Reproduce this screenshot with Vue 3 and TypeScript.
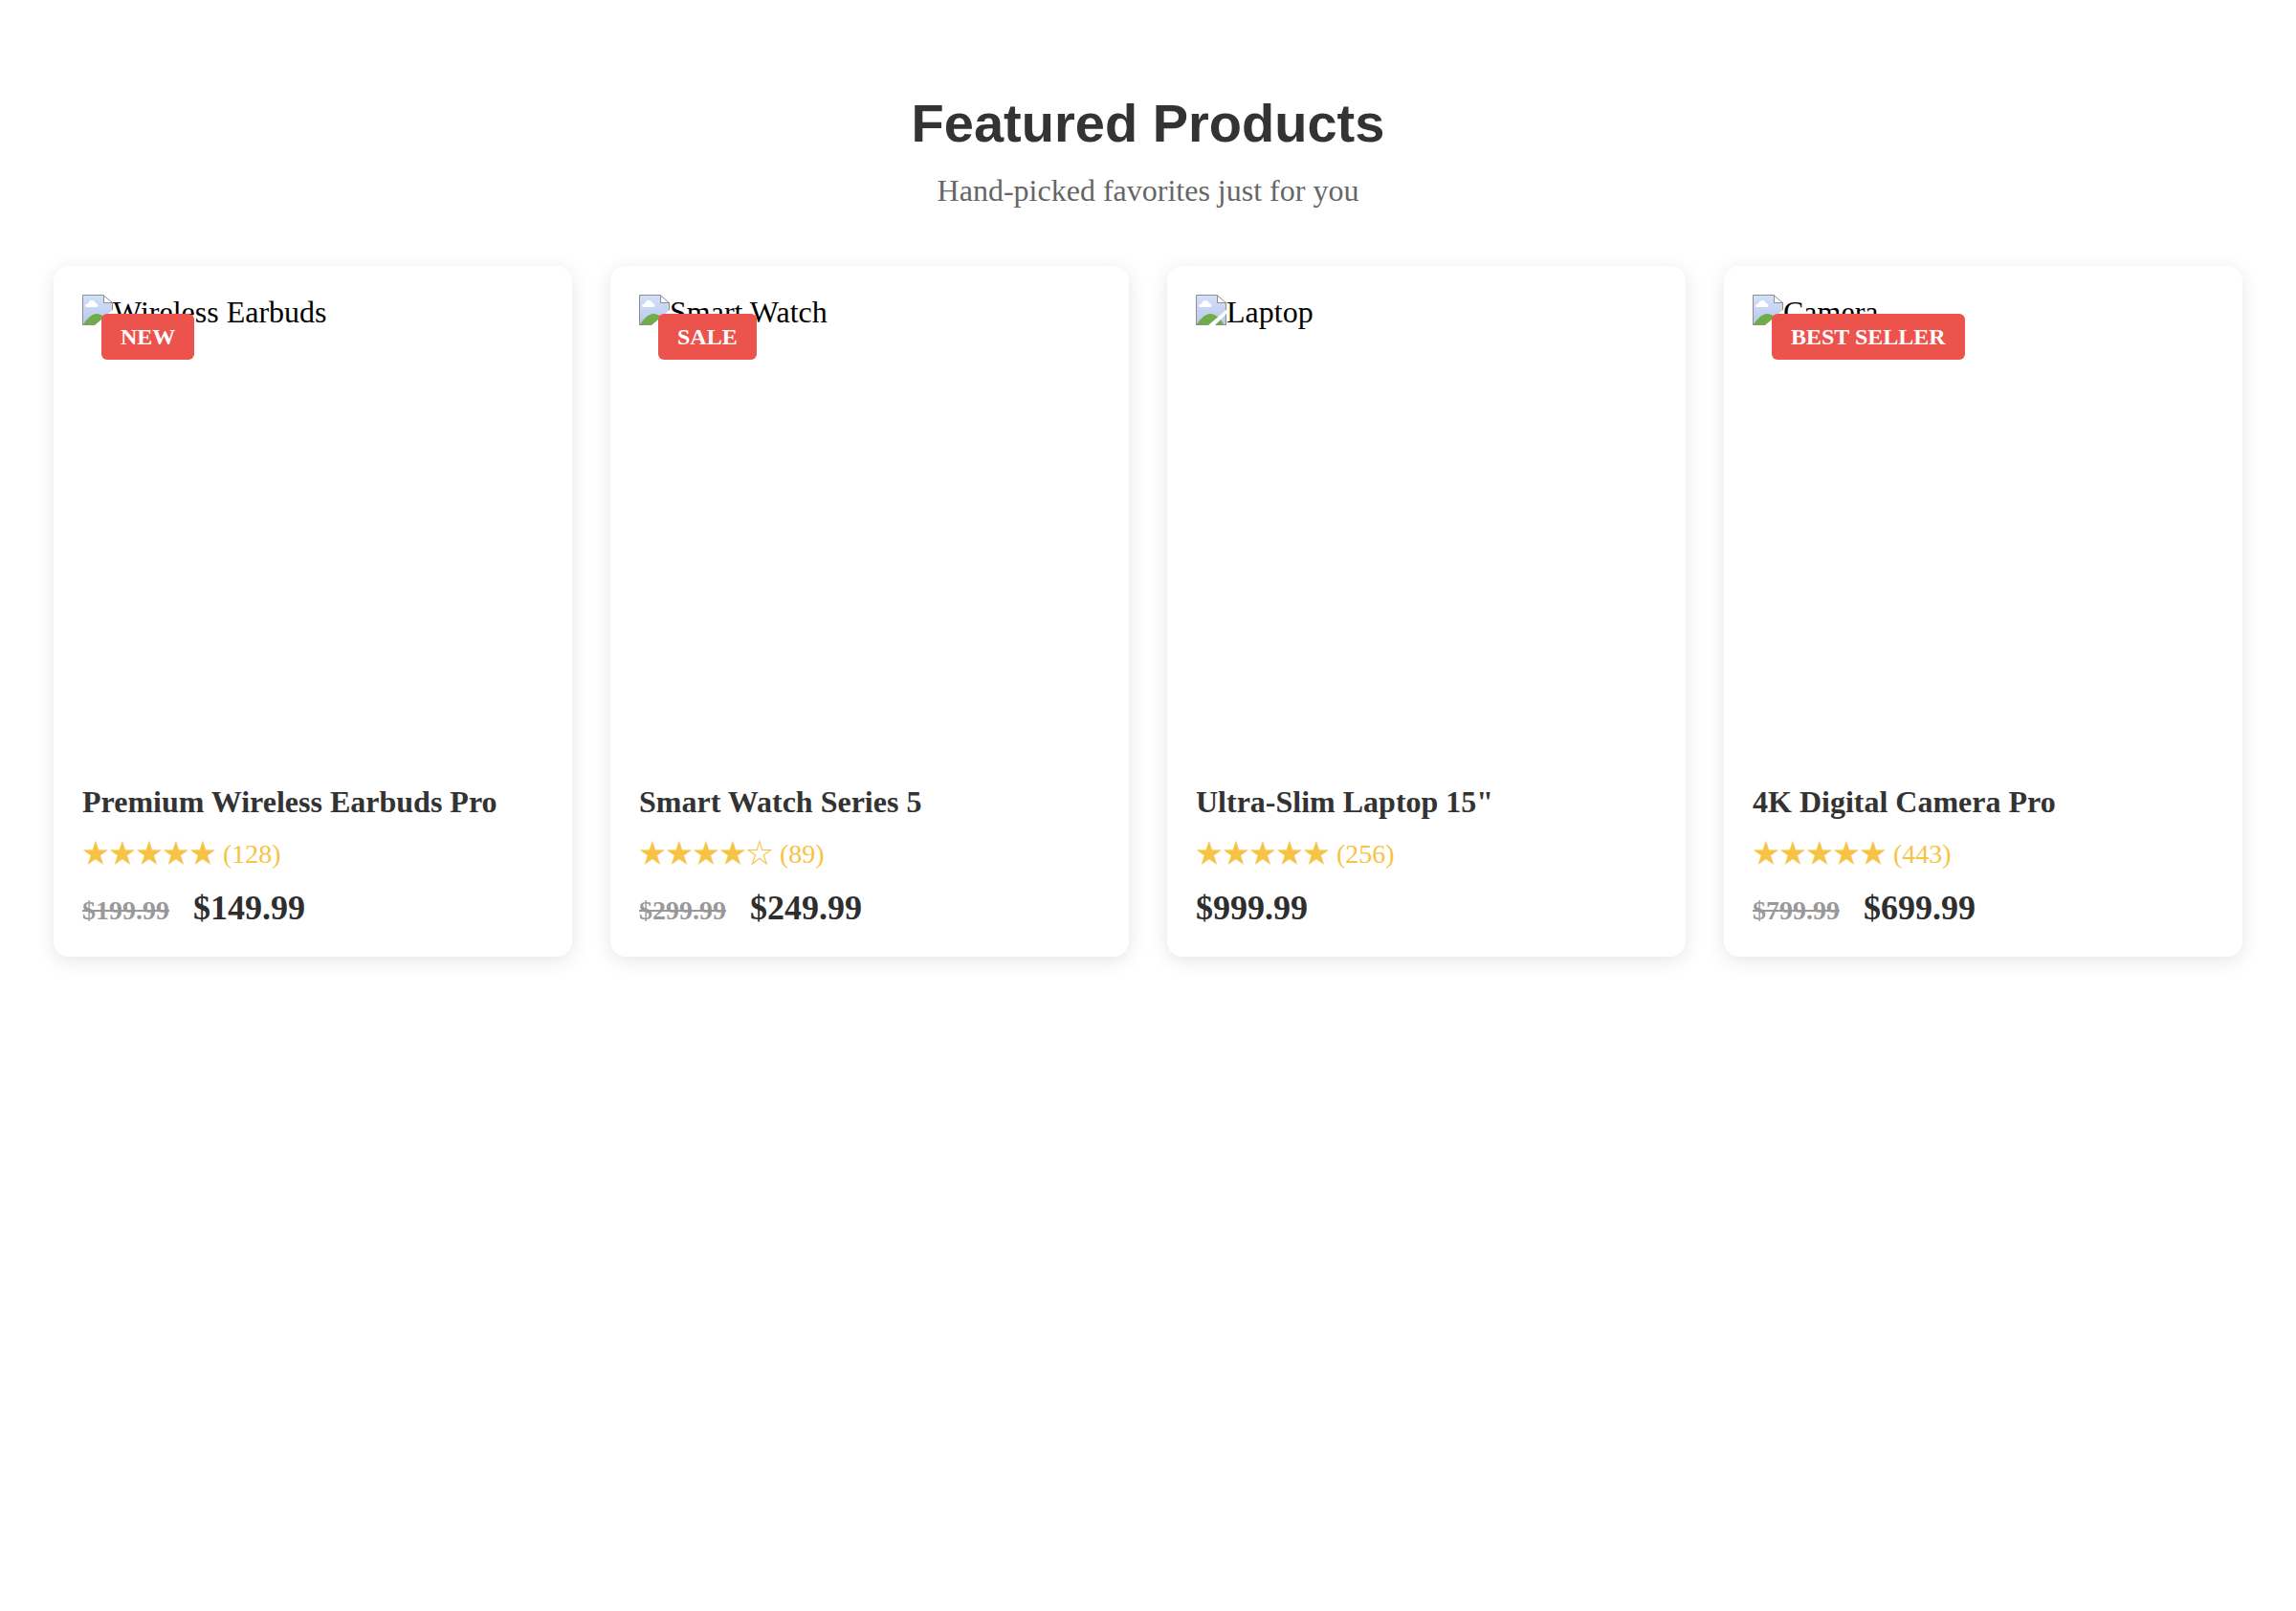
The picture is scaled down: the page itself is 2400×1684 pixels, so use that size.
<script setup lang="ts">
interface Product {
  name: string
  alt: string
  badge?: string
  stars: string
  reviews: number
  oldPrice?: string
  price: string
}

const products: Product[] = [
  { name: 'Premium Wireless Earbuds Pro', alt: 'Wireless Earbuds', badge: 'NEW', stars: '★★★★★', reviews: 128, oldPrice: '$199.99', price: '$149.99' },
  { name: 'Smart Watch Series 5', alt: 'Smart Watch', badge: 'SALE', stars: '★★★★☆', reviews: 89, oldPrice: '$299.99', price: '$249.99' },
  { name: 'Ultra-Slim Laptop 15"', alt: 'Laptop', stars: '★★★★★', reviews: 256, price: '$999.99' },
  { name: '4K Digital Camera Pro', alt: 'Camera', badge: 'BEST SELLER', stars: '★★★★★', reviews: 443, oldPrice: '$799.99', price: '$699.99' },
]
</script>

<template>
  <section class="featured">
    <header class="heading">
      <h2>Featured Products</h2>
      <p>Hand-picked favorites just for you</p>
    </header>
    <div class="grid">
      <article v-for="product in products" :key="product.name" class="card">
        <div class="media">
          <svg class="broken" viewBox="0 0 32 32" aria-hidden="true">
            <defs>
              <linearGradient id="sky" x1="0" y1="0" x2="0" y2="1">
                <stop offset="0" stop-color="#d3e1fa" />
                <stop offset="1" stop-color="#b9c8ea" />
              </linearGradient>
            </defs>
            <path d="M0 0H22L32 8V32H0Z" fill="url(#sky)" />
            <path d="M1 31C5 25 10 20 15 20C21 20 26 25 29 31Z" fill="#6fac4a" />
            <path d="M5 13C2 13 3 9 6 9.500C7 5 13 5 14 9C17 9.500 17 13 15 13Z" fill="#fff" />
            <path d="M22 0H32V8H22Z" fill="#fff" />
            <path d="M.5 32V.5H22L31.500 8.500V32M22.500 .5V8.500H32M0 31.500H32" fill="none" stroke="#8e8e8e" />
            <path d="M33 15L13 32H20L33 19Z" fill="#fff" />
          </svg>
          <span class="alt">{{ product.alt }}</span>
          <span v-if="product.badge" class="badge">{{ product.badge }}</span>
        </div>
        <h3>{{ product.name }}</h3>
        <div class="rating">{{ product.stars }} ({{ product.reviews }})</div>
        <div class="price">
          <s v-if="product.oldPrice">{{ product.oldPrice }}</s>
          <span>{{ product.price }}</span>
        </div>
      </article>
    </div>
  </section>
</template>

<style>
body {
  background: #fff;
}
</style>

<style scoped>
.featured {
  padding: 96px 56px;
  font-family: "Liberation Serif", "Noto Sans CJK JP", serif;
  font-size: 32px;
  line-height: 37px;
  color: #000;
}

.heading {
  margin-bottom: 60px;
  text-align: center;
}

h2 {
  margin: 0 0 20px;
  font-family: "Liberation Sans", sans-serif;
  font-size: 56px;
  line-height: 65px;
  color: #333;
}

.heading p {
  margin: 0;
  color: #666;
}

.grid {
  display: grid;
  grid-template-columns: repeat(4, 1fr);
  gap: 40px;
}

.card {
  padding: 30px;
  border-radius: 16px;
  background: #fff;
  box-shadow: 0 4px 20px rgba(0, 0, 0, 0.1);
}

.media {
  position: relative;
  display: flex;
  align-items: flex-start;
  height: 500px;
  margin-bottom: 12px;
}

.broken {
  flex: none;
  width: 32px;
  height: 32px;
}

.badge {
  position: absolute;
  top: 20px;
  left: 20px;
  padding: 10px 20px;
  border-radius: 6px;
  background: #ec534d;
  color: #fff;
  font-size: 24px;
  font-weight: bold;
  line-height: 28px;
}

h3 {
  margin: 0 0 20px;
  font-size: 32px;
  line-height: 37px;
  color: #333;
}

.rating {
  margin-bottom: 20px;
  font-size: 28px;
  line-height: 32px;
  color: #f7c344;
}

.price {
  display: flex;
  align-items: baseline;
  gap: 25px;
  font-size: 36px;
  font-weight: bold;
  line-height: 41px;
  color: #2e2e2e;
}

.price s {
  font-size: 28px;
  line-height: 32px;
  color: #999;
}
</style>
